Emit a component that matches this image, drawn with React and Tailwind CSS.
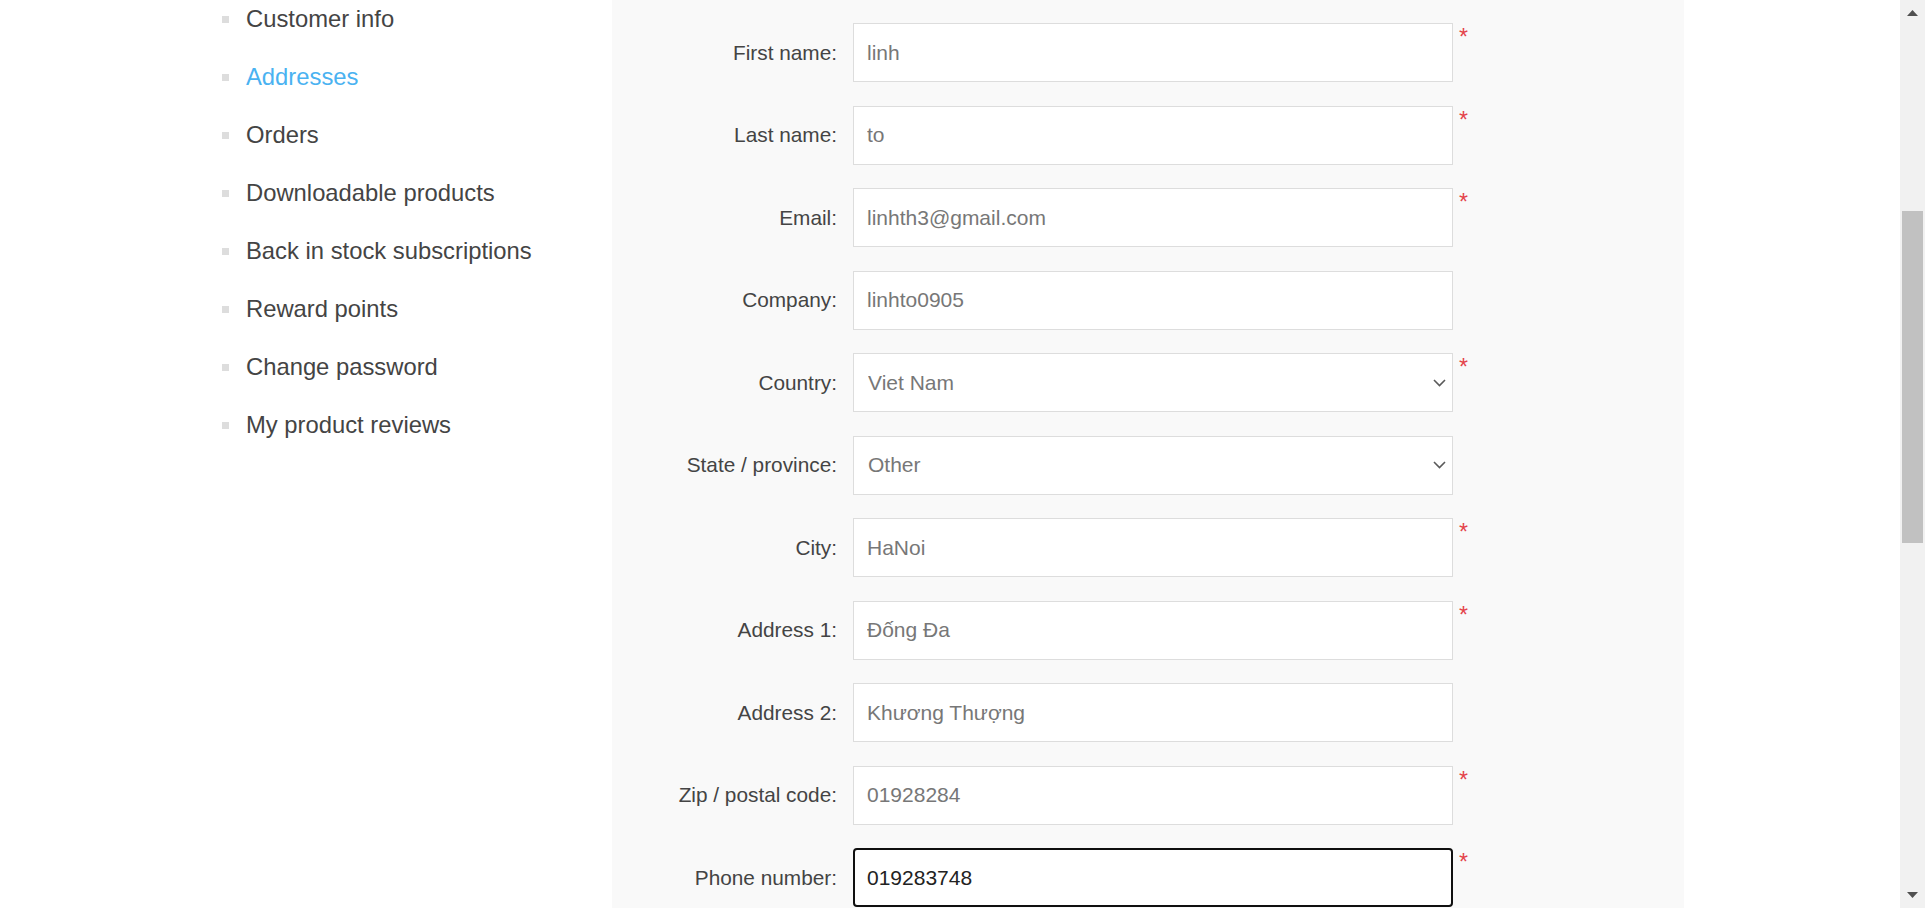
import React, { useState } from 'react';

const menuItems = [
  'Customer info',
  'Addresses',
  'Orders',
  'Downloadable products',
  'Back in stock subscriptions',
  'Reward points',
  'Change password',
  'My product reviews',
];

const fields = [
  { name: 'firstName', label: 'First name:', value: 'linh', required: true },
  { name: 'lastName', label: 'Last name:', value: 'to', required: true },
  { name: 'email', label: 'Email:', value: 'linhth3@gmail.com', required: true },
  { name: 'company', label: 'Company:', value: 'linhto0905' },
  { name: 'country', label: 'Country:', value: 'Viet Nam', required: true, select: ['Viet Nam'] },
  { name: 'state', label: 'State / province:', value: 'Other', select: ['Other'] },
  { name: 'city', label: 'City:', value: 'HaNoi', required: true },
  { name: 'address1', label: 'Address 1:', value: 'Đống Đa', required: true },
  { name: 'address2', label: 'Address 2:', value: 'Khương Thượng' },
  { name: 'zip', label: 'Zip / postal code:', value: '01928284', required: true },
  { name: 'phone', label: 'Phone number:', value: '019283748', required: true, focused: true },
];

const Chevron = () => (
  <svg
    className="absolute right-[7px] top-1/2 -translate-y-1/2 pointer-events-none"
    width="13"
    height="8"
    viewBox="0 0 13 8"
    fill="none"
  >
    <path d="M1 1l5.5 5.5L12 1" stroke="#5a5a5a" strokeWidth="1.6" />
  </svg>
);

const App = () => {
  const [formData, setFormData] = useState(
    Object.fromEntries(fields.map((f) => [f.name, f.value]))
  );

  const handleChange = (e) => {
    const { name, value } = e.target;
    setFormData((prev) => ({ ...prev, [name]: value }));
  };

  return (
    <div
      className="flex w-[1925px] h-[908px] overflow-hidden bg-white"
      style={{ fontFamily: '"Liberation Sans", Arial, sans-serif' }}
    >
      <div className="flex flex-1">
        {/* Side menu */}
        <div className="w-[612px] shrink-0 pl-[222px]">
          <ul className="-mt-[10px]">
            {menuItems.map((item) => (
              <li key={item} className="h-[58px] flex items-center">
                <span className="w-[7px] h-[7px] bg-[#dddddd] mr-[17px] shrink-0" />
                <span
                  className={
                    'text-[23.8px] leading-none ' +
                    (item === 'Addresses' ? 'text-[#4ab2f1]' : 'text-[#444444]')
                  }
                >
                  {item}
                </span>
              </li>
            ))}
          </ul>
        </div>

        {/* Address form */}
        <div className="w-[1072px] shrink-0 bg-[#f9f9f9] pt-[23px]">
          <form className="flex flex-col gap-[23.5px]">
            {fields.map((f) => (
              <div key={f.name} className="flex items-start">
                <label
                  htmlFor={f.name}
                  className="w-[225px] h-[59px] flex items-center justify-end text-[20.8px] text-[#444444]"
                >
                  {f.label}
                </label>
                <div className="relative ml-[16px] w-[600px] h-[59px]">
                  {f.select ? (
                    <>
                      <select
                        id={f.name}
                        name={f.name}
                        value={formData[f.name]}
                        onChange={handleChange}
                        className="w-full h-full appearance-none bg-white border border-[#dddddd] pl-[14px] text-[21px] text-[#777777] outline-none"
                      >
                        {f.select.map((o) => (
                          <option key={o} value={o}>
                            {o}
                          </option>
                        ))}
                      </select>
                      <Chevron />
                    </>
                  ) : (
                    <input
                      type="text"
                      id={f.name}
                      name={f.name}
                      value={formData[f.name]}
                      onChange={handleChange}
                      className={
                        f.focused
                          ? 'w-full h-full bg-white border-2 border-[#101010] rounded-[4px] pl-[12px] text-[21px] text-[#222222] outline-none'
                          : 'w-full h-full bg-white border border-[#dddddd] pl-[13px] text-[21px] text-[#777777] outline-none'
                      }
                    />
                  )}
                </div>
                {f.required && (
                  <span className="ml-[6px] mt-[3px] text-[23px] leading-none text-[#e4434b]">*</span>
                )}
              </div>
            ))}
          </form>
        </div>
        <div className="flex-1" />
      </div>

      {/* Browser scrollbar */}
      <div className="w-[25px] h-full bg-[#f1f1f1] flex flex-col items-center">
        <div className="h-[26px] w-full flex items-center justify-center">
          <svg width="11" height="6" viewBox="0 0 11 6">
            <path d="M0 6L5.5 0L11 6Z" fill="#505050" />
          </svg>
        </div>
        <div className="mt-[185px] w-[21px] h-[332px] bg-[#c1c1c1]" />
        <div className="flex-1" />
        <div className="h-[26px] w-full flex items-center justify-center">
          <svg width="11" height="6" viewBox="0 0 11 6">
            <path d="M0 0L11 0L5.5 6Z" fill="#505050" />
          </svg>
        </div>
      </div>
    </div>
  );
};

export default App;
